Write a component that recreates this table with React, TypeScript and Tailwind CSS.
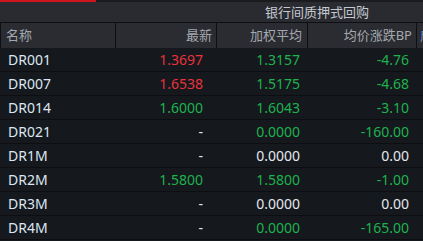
const rows = [
  { name: 'DR001', last: '1.3697', lastC: 'r', avg: '1.3157', avgC: 'g', bp: '-4.76', bpC: 'g' },
  { name: 'DR007', last: '1.6538', lastC: 'r', avg: '1.5175', avgC: 'g', bp: '-4.68', bpC: 'g' },
  { name: 'DR014', last: '1.6000', lastC: 'g', avg: '1.6043', avgC: 'g', bp: '-3.10', bpC: 'g' },
  { name: 'DR021', last: '-', lastC: 'w', avg: '0.0000', avgC: 'g', bp: '-160.00', bpC: 'g' },
  { name: 'DR1M', last: '-', lastC: 'w', avg: '0.0000', avgC: 'w', bp: '0.00', bpC: 'w' },
  { name: 'DR2M', last: '1.5800', lastC: 'g', avg: '1.5800', avgC: 'g', bp: '-1.00', bpC: 'g' },
  { name: 'DR3M', last: '-', lastC: 'w', avg: '0.0000', avgC: 'w', bp: '0.00', bpC: 'w' },
  { name: 'DR4M', last: '-', lastC: 'w', avg: '0.0000', avgC: 'g', bp: '-165.00', bpC: 'g' },
];

const color = (c: string) =>
  c === 'r' ? 'text-[#e8323c]' : c === 'g' ? 'text-[#1db34e]' : 'text-[#e4e8ee]';

const cols = 'grid grid-cols-[116px_101px_91px_109px_1fr]';

export default function App() {
  return (
    <div
      className="w-[423px] h-[241px] overflow-hidden bg-[#15181d]"
      style={{ fontFamily: '"Noto Sans", "Noto Sans CJK SC", sans-serif' }}
    >
      <div className="flex h-[2px] bg-[#1a1b1f]">
        <div className="w-[96px] bg-[#d0161c]" />
      </div>

      <div className={`${cols} h-[21px] bg-[#2a2b30] border-b border-[#0e0f12]`}>
        <div className="col-span-2" />
        <div className="col-span-2 flex items-center justify-center text-[13px] text-[#c4c9d1] leading-none">
          银行间质押式回购
        </div>
        <div />
      </div>

      <div className={`${cols} h-[25px] bg-[#2b2c31] text-[13px] text-[#a3a8b0] leading-none`}>
        <div className="flex items-center pl-[5px] border-l border-r border-[#0e0f12]">名称</div>
        <div className="flex items-center justify-end pr-[4px] border-r border-[#0e0f12]">最新</div>
        <div className="flex items-center justify-end pr-[5px] border-r border-[#0e0f12]">加权平均</div>
        <div className="flex items-center justify-end pr-[4px] border-r border-[#0e0f12]">均价涨跌BP</div>
        <div className="flex items-center pl-[3px] whitespace-nowrap overflow-hidden text-[#6f8fc4]">成交量</div>
      </div>

      {rows.map((r) => (
        <div
          key={r.name}
          className={`${cols} h-[24px] pt-px border-b border-[#0c0e11] text-[14px] leading-none`}
        >
          <div className="flex items-center pl-[8px] text-[#dce7f3]">{r.name}</div>
          <div className={`flex items-center justify-end pr-[14px] ${color(r.lastC)}`}>{r.last}</div>
          <div className={`flex items-center justify-end pr-[8px] ${color(r.avgC)}`}>{r.avg}</div>
          <div className={`flex items-center justify-end pr-[8px] ${color(r.bpC)}`}>{r.bp}</div>
          <div />
        </div>
      ))}
    </div>
  );
}
